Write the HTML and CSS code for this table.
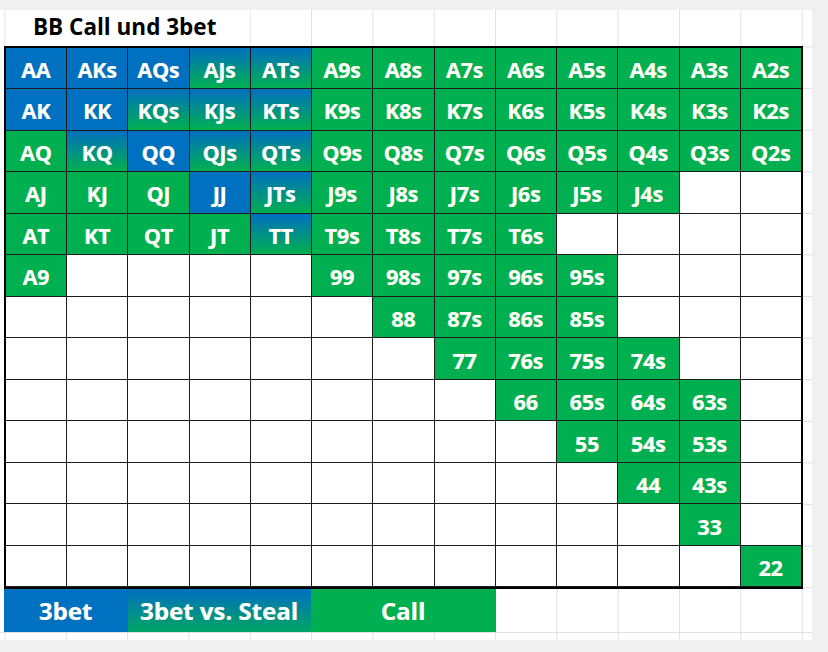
FILE: index.html
```html
<!DOCTYPE html>
<html lang="de">
<head>
<meta charset="utf-8">
<title>BB Call und 3bet</title>
<link rel="stylesheet" href="styles.css">
</head>
<body>
<div class="sheet">
  <div class="title-row"><div class="title">BB Call und 3bet</div></div>
  <div class="table-row">
    <div class="range">
      <div class="c b">AA</div><div class="c b">AKs</div><div class="c b">AQs</div><div class="c m">AJs</div><div class="c m">ATs</div><div class="c g">A9s</div><div class="c g">A8s</div><div class="c g">A7s</div><div class="c g">A6s</div><div class="c g">A5s</div><div class="c g">A4s</div><div class="c g">A3s</div><div class="c g">A2s</div>
      <div class="c b">AK</div><div class="c b">KK</div><div class="c m">KQs</div><div class="c m">KJs</div><div class="c m">KTs</div><div class="c g">K9s</div><div class="c g">K8s</div><div class="c g">K7s</div><div class="c g">K6s</div><div class="c g">K5s</div><div class="c g">K4s</div><div class="c g">K3s</div><div class="c g">K2s</div>
      <div class="c g">AQ</div><div class="c m">KQ</div><div class="c b">QQ</div><div class="c m">QJs</div><div class="c m">QTs</div><div class="c g">Q9s</div><div class="c g">Q8s</div><div class="c g">Q7s</div><div class="c g">Q6s</div><div class="c g">Q5s</div><div class="c g">Q4s</div><div class="c g">Q3s</div><div class="c g">Q2s</div>
      <div class="c g">AJ</div><div class="c g">KJ</div><div class="c g">QJ</div><div class="c b">JJ</div><div class="c m">JTs</div><div class="c g">J9s</div><div class="c g">J8s</div><div class="c g">J7s</div><div class="c g">J6s</div><div class="c g">J5s</div><div class="c g">J4s</div><div class="c"></div><div class="c"></div>
      <div class="c g">AT</div><div class="c g">KT</div><div class="c g">QT</div><div class="c g">JT</div><div class="c m">TT</div><div class="c g">T9s</div><div class="c g">T8s</div><div class="c g">T7s</div><div class="c g">T6s</div><div class="c"></div><div class="c"></div><div class="c"></div><div class="c"></div>
      <div class="c g">A9</div><div class="c"></div><div class="c"></div><div class="c"></div><div class="c"></div><div class="c g">99</div><div class="c g">98s</div><div class="c g">97s</div><div class="c g">96s</div><div class="c g">95s</div><div class="c"></div><div class="c"></div><div class="c"></div>
      <div class="c"></div><div class="c"></div><div class="c"></div><div class="c"></div><div class="c"></div><div class="c"></div><div class="c g">88</div><div class="c g">87s</div><div class="c g">86s</div><div class="c g">85s</div><div class="c"></div><div class="c"></div><div class="c"></div>
      <div class="c"></div><div class="c"></div><div class="c"></div><div class="c"></div><div class="c"></div><div class="c"></div><div class="c"></div><div class="c g">77</div><div class="c g">76s</div><div class="c g">75s</div><div class="c g">74s</div><div class="c"></div><div class="c"></div>
      <div class="c"></div><div class="c"></div><div class="c"></div><div class="c"></div><div class="c"></div><div class="c"></div><div class="c"></div><div class="c"></div><div class="c g">66</div><div class="c g">65s</div><div class="c g">64s</div><div class="c g">63s</div><div class="c"></div>
      <div class="c"></div><div class="c"></div><div class="c"></div><div class="c"></div><div class="c"></div><div class="c"></div><div class="c"></div><div class="c"></div><div class="c"></div><div class="c g">55</div><div class="c g">54s</div><div class="c g">53s</div><div class="c"></div>
      <div class="c"></div><div class="c"></div><div class="c"></div><div class="c"></div><div class="c"></div><div class="c"></div><div class="c"></div><div class="c"></div><div class="c"></div><div class="c"></div><div class="c g">44</div><div class="c g">43s</div><div class="c"></div>
      <div class="c"></div><div class="c"></div><div class="c"></div><div class="c"></div><div class="c"></div><div class="c"></div><div class="c"></div><div class="c"></div><div class="c"></div><div class="c"></div><div class="c"></div><div class="c g">33</div><div class="c"></div>
      <div class="c"></div><div class="c"></div><div class="c"></div><div class="c"></div><div class="c"></div><div class="c"></div><div class="c"></div><div class="c"></div><div class="c"></div><div class="c"></div><div class="c"></div><div class="c"></div><div class="c g">22</div>
    </div>
    <div class="side-strip"></div>
  </div>
  <div class="legend-row">
    <div class="leg leg-3bet">3bet</div>
    <div class="leg leg-steal">3bet vs. Steal</div>
    <div class="leg leg-call">Call</div>
  </div>
</div>
</body>
</html>
```

FILE: styles.css
```css
html, body {
  margin: 0;
  padding: 0;
  background: #f0f0f0;
}

body {
  width: 828px;
  height: 652px;
  overflow: hidden;
  font-family: "Open Sans", "Liberation Sans", sans-serif;
}

.sheet {
  margin-top: 10px;
  width: 812px;
  height: 630px;
  background-color: #ffffff;
  background-image: linear-gradient(90deg, #e1e1e1 1px, transparent 1px);
  background-size: 61.33px 100%;
  background-position: 4.4px 0;
  background-repeat: repeat-x;
}

.title-row {
  height: 35.5px;
  display: flex;
}

.title {
  margin-left: 6px;
  width: 244px;
  height: 100%;
  background: #ffffff;
  box-sizing: border-box;
  padding-left: 27px;
  font-weight: 700;
  font-size: 22.5px;
  line-height: 33px;
  color: #000;
}

.table-row {
  display: flex;
  height: 543px;
}

.range {
  margin-left: 4px;
  width: 799px;
  height: 543px;
  box-sizing: border-box;
  border: 2px solid #000;
  background: #1c1c1c;
  display: grid;
  grid-template-columns: repeat(13, 1fr);
  grid-template-rows: repeat(13, 1fr);
  gap: 1px;
}

.c {
  background: #ffffff;
  display: flex;
  align-items: center;
  justify-content: center;
  padding-top: 3px;
  box-sizing: border-box;
  color: #ffffff;
  font-weight: 700;
  font-size: 21.5px;
  letter-spacing: -0.2px;
  text-shadow: -0.6px 0 0 rgba(255, 236, 140, 0.55);
}

.b { background: #0070c0; }
.g { background: #00b050; }
.m { background: linear-gradient(180deg, #0070c0 0%, #00b050 100%); }

.side-strip {
  flex: 1;
  background-image: linear-gradient(180deg, #e1e1e1 1px, transparent 1px);
  background-size: 100% 41.6px;
  background-position: 0 0.5px;
}

.legend-row {
  display: flex;
  height: 43.5px;
  padding-left: 4px;
  border-bottom: 1px solid #e1e1e1;
}

.leg {
  display: flex;
  align-items: center;
  justify-content: center;
  color: #ffffff;
  font-weight: 700;
  font-size: 24px;
  text-shadow: -0.6px 0 0 rgba(255, 236, 140, 0.55);
}

.leg-3bet { width: 123.5px; background: #0070c0; }
.leg-steal { width: 183.5px; background: linear-gradient(180deg, #0070c0 0%, #00a565 100%); }
.leg-call { width: 184.5px; background: #00b050; }
```
